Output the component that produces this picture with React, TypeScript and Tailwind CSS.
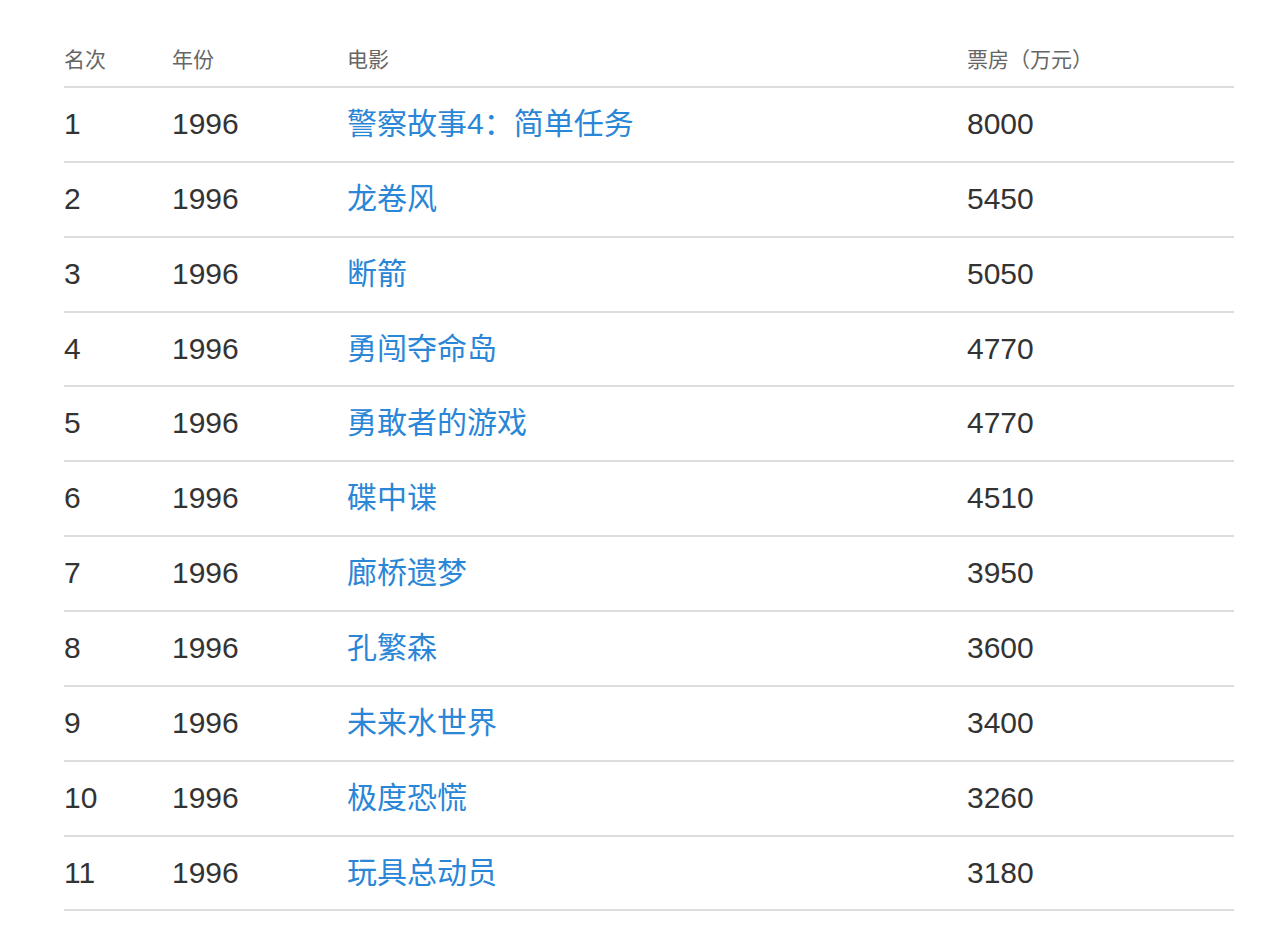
const rows: [number, string, string, string][] = [
  [1, "1996", "警察故事4：简单任务", "8000"],
  [2, "1996", "龙卷风", "5450"],
  [3, "1996", "断箭", "5050"],
  [4, "1996", "勇闯夺命岛", "4770"],
  [5, "1996", "勇敢者的游戏", "4770"],
  [6, "1996", "碟中谍", "4510"],
  [7, "1996", "廊桥遗梦", "3950"],
  [8, "1996", "孔繁森", "3600"],
  [9, "1996", "未来水世界", "3400"],
  [10, "1996", "极度恐慌", "3260"],
  [11, "1996", "玩具总动员", "3180"],
];

export default function App() {
  return (
    <div
      className="min-h-[941px] bg-white pt-[31px] pl-[64px]"
      style={{ fontFamily: '"Liberation Sans", Arial, "Noto Sans CJK SC", sans-serif' }}
    >
      <table className="w-[1170px] table-fixed border-collapse text-left">
        <colgroup>
          <col className="w-[108px]" />
          <col className="w-[175px]" />
          <col className="w-[620px]" />
          <col className="w-[267px]" />
        </colgroup>
        <thead>
          <tr className="border-b-2 border-[#dddddd] text-[21px] leading-[30px] text-[#666666]">
            <th className="pt-[14px] pb-[11px] font-normal">名次</th>
            <th className="pt-[14px] pb-[11px] font-normal">年份</th>
            <th className="pt-[14px] pb-[11px] font-normal">电影</th>
            <th className="pt-[14px] pb-[11px] font-normal">票房（万元）</th>
          </tr>
        </thead>
        <tbody className="text-[30px] leading-[42.86px] text-[#333333]">
          {rows.map(([rank, year, title, box]) => (
            <tr key={rank} className="border-b-2 border-[#dddddd]">
              <td className="py-[15px]">{rank}</td>
              <td className="py-[15px]">{year}</td>
              <td className="py-[15px]">
                <a href="#" className="text-[#2a86d6] no-underline">
                  {title}
                </a>
              </td>
              <td className="py-[15px]">{box}</td>
            </tr>
          ))}
        </tbody>
      </table>
    </div>
  );
}
